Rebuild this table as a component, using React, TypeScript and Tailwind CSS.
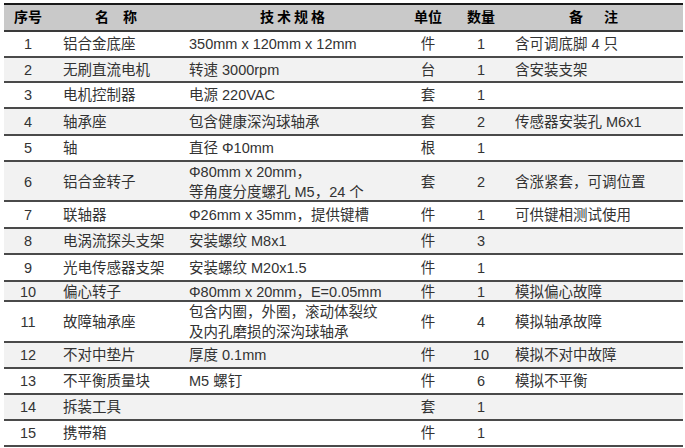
import React from "react";

type Row = {
  no: string;
  name: string;
  spec: React.ReactNode;
  unit: string;
  qty: string;
  note: string;
  h: string;
};

const rows: Row[] = [
  { no: "1", name: "铝合金底座", spec: "350mm x 120mm x 12mm", unit: "件", qty: "1", note: "含可调底脚 4 只", h: "h-[26px]" },
  { no: "2", name: "无刷直流电机", spec: "转速 3000rpm", unit: "台", qty: "1", note: "含安装支架", h: "h-[25px]" },
  { no: "3", name: "电机控制器", spec: "电源 220VAC", unit: "套", qty: "1", note: "", h: "h-[26px]" },
  { no: "4", name: "轴承座", spec: "包含健康深沟球轴承", unit: "套", qty: "2", note: "传感器安装孔 M6x1", h: "h-[27px]" },
  { no: "5", name: "轴", spec: "直径 Φ10mm", unit: "根", qty: "1", note: "", h: "h-[26px]" },
  {
    no: "6",
    name: "铝合金转子",
    spec: (
      <>
        Φ80mm x 20mm，
        <br />
        等角度分度螺孔 M5，24 个
      </>
    ),
    unit: "套",
    qty: "2",
    note: "含涨紧套，可调位置",
    h: "h-[40px]",
  },
  { no: "7", name: "联轴器", spec: "Φ26mm x 35mm，提供键槽", unit: "件", qty: "1", note: "可供键相测试使用", h: "h-[27px]" },
  { no: "8", name: "电涡流探头支架", spec: "安装螺纹 M8x1", unit: "件", qty: "3", note: "", h: "h-[26px]" },
  { no: "9", name: "光电传感器支架", spec: "安装螺纹 M20x1.5", unit: "件", qty: "1", note: "", h: "h-[27px]" },
  { no: "10", name: "偏心转子", spec: "Φ80mm x 20mm，E=0.05mm", unit: "件", qty: "1", note: "模拟偏心故障", h: "h-[20px]" },
  {
    no: "11",
    name: "故障轴承座",
    spec: (
      <>
        包含内圈，外圈，滚动体裂纹
        <br />
        及内孔磨损的深沟球轴承
      </>
    ),
    unit: "件",
    qty: "4",
    note: "模拟轴承故障",
    h: "h-[41px]",
  },
  { no: "12", name: "不对中垫片", spec: "厚度 0.1mm", unit: "件", qty: "10", note: "模拟不对中故障", h: "h-[26px]" },
  { no: "13", name: "不平衡质量块", spec: "M5 螺钉", unit: "件", qty: "6", note: "模拟不平衡", h: "h-[26px]" },
  { no: "14", name: "拆装工具", spec: "", unit: "套", qty: "1", note: "", h: "h-[26px]" },
  { no: "15", name: "携带箱", spec: "", unit: "件", qty: "1", note: "", h: "h-[26px]" },
];

const cols = "grid grid-cols-[48px_128px_222px_52px_54px_1fr]";

export default function App() {
  return (
    <div
      className="w-[685px] h-[448px] bg-white overflow-hidden pt-[3px]"
      style={{ fontFamily: '"Liberation Sans", "Noto Sans CJK SC", sans-serif' }}
    >
      <div className="ml-[4px] w-[679px] border-t-2 border-[#1a1a1a]">
        {/* Header */}
        <div className={`${cols} h-[27px] bg-[#c9c9c9] border-b-2 border-[#3a3a3a] items-center text-[14px] font-bold text-black`}>
          <div className="text-center">序号</div>
          <div className="text-center">
            <span className="mr-[14px]">名</span>称
          </div>
          <div className="text-center tracking-[3px] pl-[6px]">技术规格</div>
          <div className="text-center">单位</div>
          <div className="text-center">数量</div>
          <div className="text-center pr-[4px]">
            <span className="mr-[21px]">备</span>注
          </div>
        </div>

        {rows.map((r, i) => (
          <div
            key={r.no}
            className={`${cols} ${r.h} items-center border-b-2 border-[#4a4a4a] text-[14.5px] text-[#333] leading-[20px] ${
              i % 2 === 1 ? "bg-[#f2f2f2]" : "bg-white"
            }`}
          >
            <div className="text-center">{r.no}</div>
            <div className="pl-[11px] whitespace-nowrap">{r.name}</div>
            <div className="pl-[9px] whitespace-nowrap">{r.spec}</div>
            <div className="text-center">{r.unit}</div>
            <div className="text-center">{r.qty}</div>
            <div className="pl-[7px] whitespace-nowrap">{r.note}</div>
          </div>
        ))}
      </div>
    </div>
  );
}
